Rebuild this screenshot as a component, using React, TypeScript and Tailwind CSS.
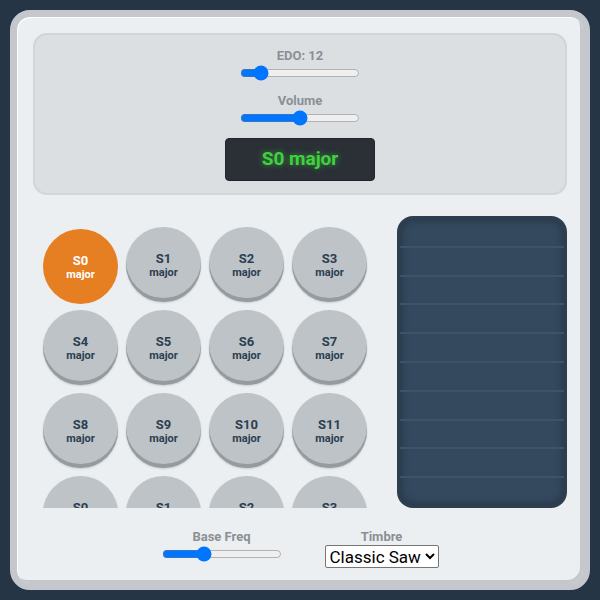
import { useState } from "react";

const pads = Array.from({ length: 24 }, (_, i) => ({
  id: i,
  name: `S${i % 12}`,
  quality: "major",
}));

function Slider({
  label,
  min,
  max,
  value,
  onChange,
}: {
  label: string;
  min: number;
  max: number;
  value: number;
  onChange: (v: number) => void;
}) {
  return (
    <div className="flex flex-col items-center">
      <span className="text-[13px] leading-[16px] font-bold text-[#8a8f94]">
        {label}
      </span>
      <input
        type="range"
        min={min}
        max={max}
        value={value}
        onChange={(e) => onChange(Number(e.target.value))}
        className="w-[120px] h-[16px] mt-[1px]"
      />
    </div>
  );
}

export default function App() {
  const [edo, setEdo] = useState(12);
  const [volume, setVolume] = useState(50);
  const [baseFreq, setBaseFreq] = useState(33);
  const [active, setActive] = useState(0);
  const [timbre, setTimbre] = useState("saw");

  const current = pads[active];

  return (
    <div className="min-h-[600px] bg-[#253545] p-[10px] font-['Roboto',sans-serif]">
      <div className="h-[580px] rounded-[20px] border-[7px] border-[#c4c8cc] bg-[#eceff1] shadow-[inset_1px_1px_0_#ffffff,inset_-3px_-3px_0_#c4c8cc] px-[16px] pt-[16px] flex flex-col">
        {/* top controls */}
        <div className="h-[162px] rounded-[14px] bg-[#dcdfe2] border-2 border-[#d2d5d8] flex flex-col items-center pt-[13px]">
          <Slider label={`EDO: ${edo}`} min={5} max={60} value={edo} onChange={setEdo} />
          <div className="mt-[12px]">
            <Slider label="Volume" min={0} max={100} value={volume} onChange={setVolume} />
          </div>
          <div className="mt-[12px] w-[150px] h-[43px] rounded-[4px] bg-[#2b3037] border border-[#22262c] flex items-center justify-center">
            <span className="text-[19px] font-bold text-[#3fd23f] [text-shadow:0_0_6px_rgba(63,210,63,0.6)]">
              {current.name} {current.quality}
            </span>
          </div>
        </div>

        {/* keys + pad */}
        <div className="mt-[21px] h-[292px] flex gap-[20px]">
          <div className="w-[344px] overflow-hidden px-[10px] pt-[11px]">
            <div className="grid grid-cols-4 gap-[8px] w-[324px]">
              {pads.map((p) => {
                const on = p.id === active;
                return (
                  <button
                    key={p.id}
                    onClick={() => setActive(p.id)}
                    className={
                      on
                        ? "w-[75px] h-[75px] rounded-full bg-[#e67e22] text-white translate-y-[2px] flex flex-col items-center justify-center"
                        : "w-[75px] h-[75px] rounded-full bg-[#bdc3c7] text-[#2c3e50] shadow-[inset_0_-4px_0_#959c9f,0_1px_2px_rgba(0,0,0,0.15)] flex flex-col items-center justify-center"
                    }
                  >
                    <span className="text-[13px] leading-[15px] font-bold">{p.name}</span>
                    <span className="text-[11px] leading-[13px] font-bold">{p.quality}</span>
                  </button>
                );
              })}
            </div>
          </div>

          <div className="w-[170px] rounded-[16px] bg-[#34495e] border-[3px] border-[#2c3e50] shadow-[inset_0_0_10px_rgba(0,0,0,0.35)] flex flex-col overflow-hidden">
            {Array.from({ length: 10 }, (_, i) => (
              <div
                key={i}
                className={i < 9 ? "flex-1 border-b-2 border-[#3d5369]" : "flex-1"}
              />
            ))}
          </div>
        </div>

        {/* bottom controls */}
        <div className="mt-[21px] flex justify-center items-start gap-[43px]">
          <Slider label="Base Freq" min={0} max={100} value={baseFreq} onChange={setBaseFreq} />
          <div className="flex flex-col items-center">
            <span className="text-[13px] leading-[16px] font-bold text-[#8a8f94]">
              Timbre
            </span>
            <select
              value={timbre}
              onChange={(e) => setTimbre(e.target.value)}
              className="h-[23px] text-[17px] bg-white text-black border border-[#767676] rounded-[2px] font-['Roboto',sans-serif]"
            >
              <option value="saw">Classic Saw</option>
              <option value="square">Square</option>
              <option value="sine">Sine</option>
            </select>
          </div>
        </div>
      </div>
    </div>
  );
}
